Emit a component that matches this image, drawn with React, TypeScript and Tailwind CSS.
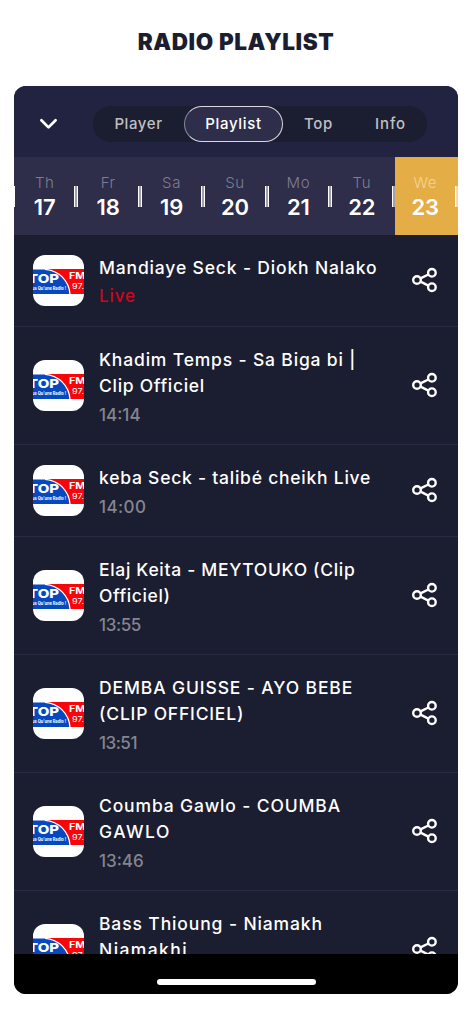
const tabs = [
  { label: 'Player', box: 'w-[91px]', text: 'tracking-[0.6px] text-[#c0c0c2]' },
  { label: 'Playlist', box: 'w-[99px]', text: 'tracking-[0.7px] text-white' },
  { label: 'Top', box: 'w-[71px]', text: 'tracking-[0.6px] text-[#c0c0c2]' },
  { label: 'Info', box: 'w-[73px]', text: 'tracking-[0.9px] text-[#c0c0c2]' },
]

const days = [
  { name: 'Th', date: '17' },
  { name: 'Fr', date: '18' },
  { name: 'Sa', date: '19' },
  { name: 'Su', date: '20' },
  { name: 'Mo', date: '21' },
  { name: 'Tu', date: '22' },
  { name: 'We', date: '23', active: true },
]

const tracks = [
  {
    lines: [{ text: 'Mandiaye Seck - Diokh Nalako', spacing: 'tracking-[0.84px]' }],
    time: 'Live',
    timeStyle: 'tracking-[0.9px] text-[#cf061f]',
  },
  {
    lines: [
      { text: 'Khadim Temps - Sa Biga bi |', spacing: 'tracking-[0.83px]' },
      { text: 'Clip Officiel', spacing: 'tracking-[0.7px]' },
    ],
    time: '14:14',
    timeStyle: 'tracking-normal text-[#85858f]',
  },
  {
    lines: [{ text: 'keba Seck - talibé cheikh Live', spacing: 'tracking-[0.76px]' }],
    time: '14:00',
    timeStyle: 'tracking-[0.4px] text-[#85858f]',
  },
  {
    lines: [
      { text: 'Elaj Keita - MEYTOUKO (Clip', spacing: 'tracking-[0.68px]' },
      { text: 'Officiel)', spacing: 'tracking-[0.6px]' },
    ],
    time: '13:55',
    timeStyle: 'tracking-[-0.4px] text-[#85858f]',
  },
  {
    lines: [
      { text: 'DEMBA GUISSE - AYO BEBE', spacing: 'tracking-[0.88px]' },
      { text: '(CLIP OFFICIEL)', spacing: 'tracking-[0.8px]' },
    ],
    time: '13:51',
    timeStyle: 'tracking-[-0.5px] text-[#85858f]',
  },
  {
    lines: [
      { text: 'Coumba Gawlo - COUMBA', spacing: 'tracking-[0.85px]' },
      { text: 'GAWLO', spacing: 'tracking-[1.5px]' },
    ],
    time: '13:46',
    timeStyle: 'tracking-normal text-[#85858f]',
  },
  {
    lines: [
      { text: 'Bass Thioung - Niamakh', spacing: 'tracking-[0.88px]' },
      { text: 'Niamakhi', spacing: 'tracking-[1.4px]' },
    ],
    time: '13:41',
    timeStyle: 'tracking-normal text-[#85858f]',
  },
]

const StationLogo = () => (
  <svg className="mb-[3px] h-[51px] w-[51px] shrink-0 rounded-[12px] bg-white" viewBox="0 0 51 51">
    <path d="M14 14H51V39H36Z" fill="#fb0409" />
    <path d="M0 14.6H12C25 15.5 35.5 26 36.5 39H0Z" fill="#0648c0" />
    <path d="M12 14.3C26 15.3 36 26 37 39" fill="none" stroke="#fff" strokeWidth="1.3" />
    <text x="-5" y="28" fontSize="12.2" fontWeight="800" textLength="31" lengthAdjust="spacingAndGlyphs" fill="#fff">
      TOP
    </text>
    <text x="-1" y="35.3" fontSize="4.4" fontWeight="700" textLength="34" lengthAdjust="spacingAndGlyphs" fill="#fff">
      us Qu’une Radio !
    </text>
    <text x="36" y="24" fontSize="8.6" fontWeight="700" textLength="16.5" lengthAdjust="spacingAndGlyphs" fill="#fff">
      FM
    </text>
    <text x="39" y="33.6" fontSize="7.6" textLength="12" lengthAdjust="spacingAndGlyphs" fill="#fff">
      97.
    </text>
  </svg>
)

const ShareIcon = () => (
  <svg
    className="mb-[4px] h-[26px] w-[26px] shrink-0"
    viewBox="0 0 26 26"
    fill="none"
    stroke="#fff"
    strokeWidth="2.4"
  >
    <circle cx="5" cy="13" r="3.8" />
    <circle cx="19.9" cy="5.8" r="3.8" />
    <circle cx="19.9" cy="20.2" r="3.8" />
    <path d="M8.5 11.4 16.4 7.5M8.5 14.7l7.9 3.9" />
  </svg>
)

const TopBar = () => (
  <header className="flex h-[71px] shrink-0 items-center bg-[#212340] pt-[5px]">
    <svg
      className="ml-[25px] h-3 w-[19px]"
      viewBox="0 0 19 12"
      fill="none"
      stroke="#fff"
      strokeWidth="2.7"
      strokeLinecap="round"
      strokeLinejoin="round"
    >
      <path d="m2.4 2.2 7.1 7.2 7.1-7.2" />
    </svg>
    <nav className="ml-[35px] flex h-9 w-[334px] rounded-full bg-[#1b1d30]">
      {tabs.map((tab) => (
        <button
          key={tab.label}
          className={`flex h-9 items-center justify-center text-[15px] font-medium ${tab.box} ${tab.text} ${
            tab.label === 'Playlist' ? 'rounded-full border border-[#d9d9df] border-l-[#85869a] bg-[#2e2d4a]' : ''
          }`}
        >
          {tab.label}
        </button>
      ))}
    </nav>
  </header>
)

const DayStrip = () => (
  <div className="grid h-[78px] shrink-0 grid-cols-7 bg-[#2e2d4a]">
    {days.map((day) => (
      <div
        key={day.name}
        className={`relative flex flex-col items-center pt-[14px] pr-[2px] ${day.active ? 'bg-[#e4ad45]' : ''}`}
      >
        <span
          className={`text-[15px] font-light leading-[23px] tracking-[0.6px] ${
            day.active ? 'text-[#f3d49b]' : 'text-[#7f7e91]'
          }`}
        >
          {day.name}
        </span>
        <span className="text-[22px] font-semibold leading-[26px] text-white">{day.date}</span>
        {!day.active && <span className="absolute left-0 top-[29px] h-[21px] w-px bg-white" />}
        <span className="absolute right-0 top-[29px] h-[21px] w-[3px] border-l border-white bg-white/55" />
      </div>
    ))}
  </div>
)

export default function App() {
  return (
    <div className="flex h-[1024px] w-[472px] flex-col overflow-hidden bg-white font-['Inter',sans-serif]">
      <h1 className="flex h-[84px] shrink-0 items-center justify-center text-[22.5px] font-black tracking-[0.6px] text-[#1b1d30]">
        RADIO PLAYLIST
      </h1>
      <main className="mx-[14px] mt-[2px] flex h-[908px] shrink-0 flex-col overflow-hidden rounded-[12px] bg-[#1b1d30]">
        <TopBar />
        <DayStrip />
        <ul className="min-h-0 flex-1 overflow-hidden">
          {tracks.map((track) => (
            <li
              key={track.time}
              className="flex items-center border-b border-[#292b43] pl-[19px] pr-5 pt-[19.6px] pb-[16.4px]"
            >
              <StationLogo />
              <div className="ml-[15px] min-w-0 flex-1 whitespace-nowrap text-[17.5px] font-medium leading-[26.1px] text-white">
                {track.lines.map((line) => (
                  <p key={line.text} className={line.spacing}>
                    {line.text}
                  </p>
                ))}
                <p className={`mt-[2.8px] text-[17px] ${track.timeStyle}`}>{track.time}</p>
              </div>
              <ShareIcon />
            </li>
          ))}
        </ul>
        <footer className="flex h-10 shrink-0 justify-center bg-black pt-[25px]">
          <div className="h-[6px] w-[159px] rounded-full bg-white" />
        </footer>
      </main>
    </div>
  )
}
